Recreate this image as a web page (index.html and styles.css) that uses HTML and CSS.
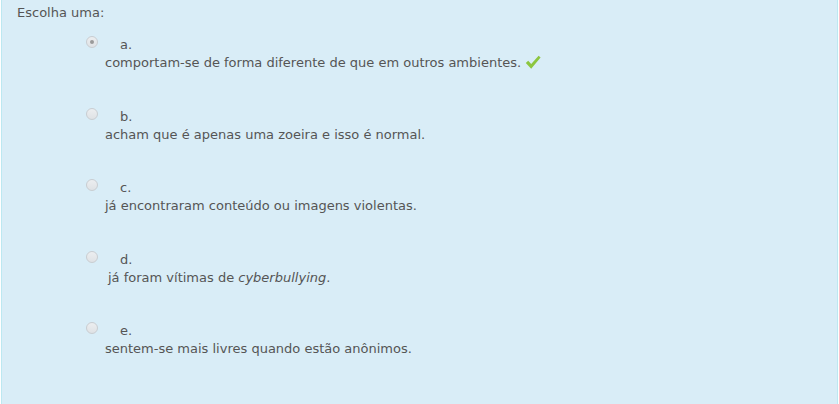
FILE: index.html
```html
<!DOCTYPE html>
<html lang="pt">
<head>
    <meta charset="UTF-8">
    <title>Escolha uma</title>
    <link rel="stylesheet" href="styles.css">
</head>
<body>
    <div class="formulation">
        <div class="prompt">Escolha uma:</div>
        <div class="answer">
            <div class="option">
                <div class="option-head">
                    <span class="radio checked"></span>
                    <span class="letter">a.</span>
                </div>
                <div class="option-text">comportam-se de forma diferente de que em outros ambientes.
                    <svg class="check" width="16" height="15" viewBox="0 0 16 15"><path d="M0.8 8 L3.2 5.8 L6.2 9 L13.6 0.8 L15.6 2.6 L6.2 13.8 Z" fill="#8cc63f"/></svg>
                </div>
            </div>
            <div class="option">
                <div class="option-head">
                    <span class="radio"></span>
                    <span class="letter">b.</span>
                </div>
                <div class="option-text">acham que é apenas uma zoeira e isso é normal.</div>
            </div>
            <div class="option">
                <div class="option-head">
                    <span class="radio"></span>
                    <span class="letter">c.</span>
                </div>
                <div class="option-text">já encontraram conteúdo ou imagens violentas.</div>
            </div>
            <div class="option">
                <div class="option-head">
                    <span class="radio"></span>
                    <span class="letter">d.</span>
                </div>
                <div class="option-text indent">já foram vítimas de <em>cyberbullying</em>.</div>
            </div>
            <div class="option">
                <div class="option-head">
                    <span class="radio"></span>
                    <span class="letter">e.</span>
                </div>
                <div class="option-text">sentem-se mais livres quando estão anônimos.</div>
            </div>
        </div>
    </div>
</body>
</html>
```

FILE: styles.css
```css
body {
    margin: 0;
    font-family: "DejaVu Sans", sans-serif;
    font-size: 13px;
    color: #555;
    background: #fff;
}
.formulation {
    margin-left: 1px;
    width: 835px;
    height: 404px;
    background-color: #d9edf7;
    border-left: 1px solid #bce8f1;
    border-right: 1px solid #bce8f1;
}
.prompt {
    padding: 5px 0 0 15px;
    line-height: 16px;
}
.answer {
    padding-top: 14px;
    padding-left: 84px;
}
.option {
    height: 71.5px;
}
.option-head {
    display: flex;
    align-items: flex-start;
    line-height: 18px;
}
.radio {
    width: 10px;
    height: 10px;
    margin-top: 1px;
    border-radius: 50%;
    border: 1px solid #c9cdd1;
    background: linear-gradient(#eceef0, #dfe2e5);
    position: relative;
}
.radio.checked::after {
    content: "";
    position: absolute;
    left: 3px;
    top: 3px;
    width: 4px;
    height: 4px;
    border-radius: 50%;
    background: #9a9a9a;
}
.letter {
    margin-left: 22px;
    margin-top: 1px;
}
.option-text {
    margin-left: 19px;
    line-height: 18px;
}
.option-text.indent {
    margin-left: 22px;
}
.check {
    vertical-align: -3px;
}
```
